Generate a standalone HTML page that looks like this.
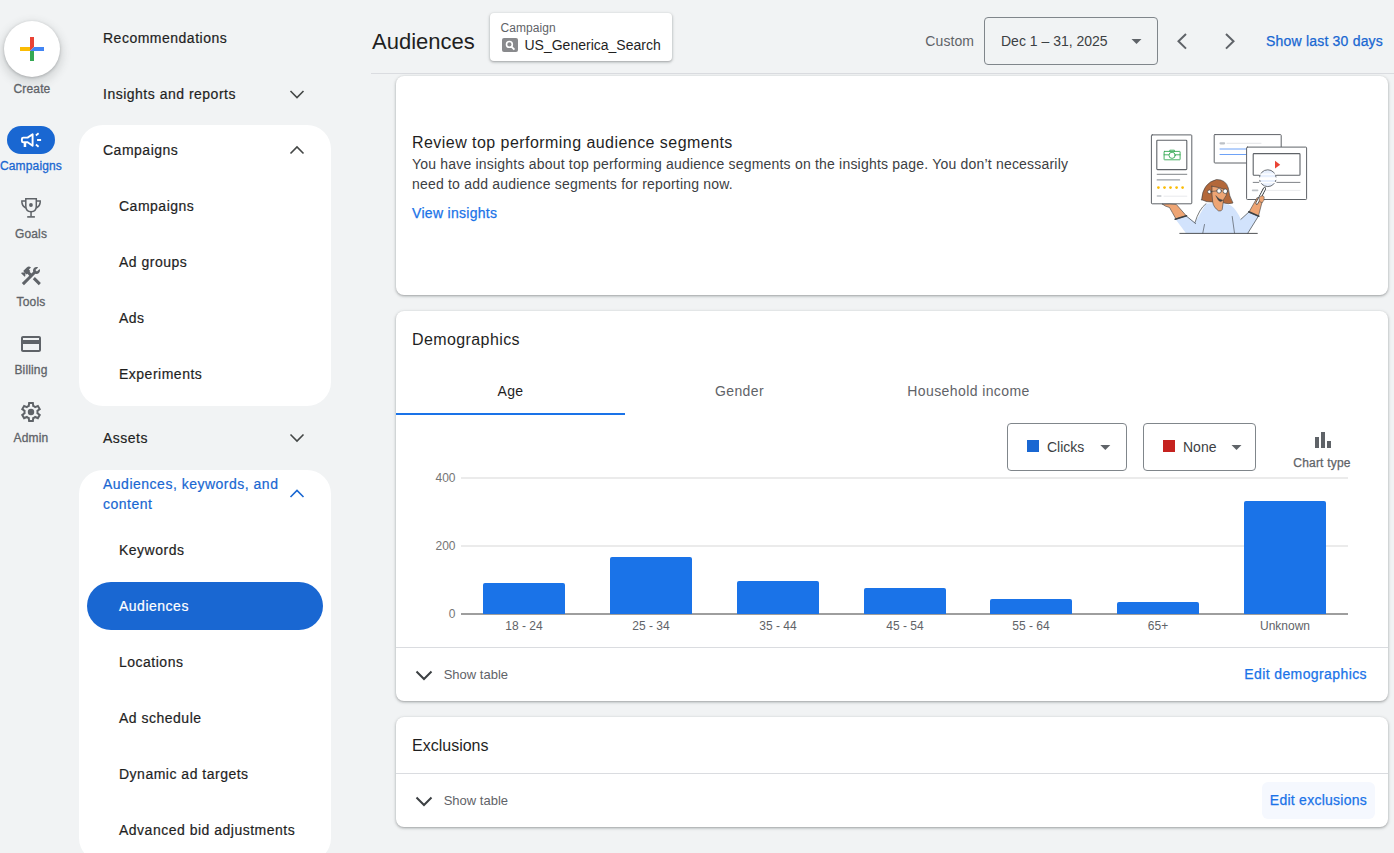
<!DOCTYPE html>
<html><head><meta charset="utf-8"><style>
html,body{margin:0;padding:0;}
body{width:1394px;height:853px;overflow:hidden;background:#f1f3f4;font-family:"Liberation Sans",sans-serif;position:relative;}
.t{position:absolute;white-space:nowrap;}
.r{position:absolute;}
</style></head><body>
<div class="r" style="left:4px;top:21px;width:56px;height:56px;background:#fff;border-radius:50%;box-shadow:0 1px 3px rgba(60,64,67,.3),0 4px 8px 3px rgba(60,64,67,.15);"></div>
<svg class="r" style="left:20px;top:37px" width="24" height="24" viewBox="0 0 24 24"><path d="M10 0H14V10L10 14Z" fill="#ea4335"/><path d="M0 10H10V14H0Z" fill="#fbbc04"/><path d="M14 10H24V14H10Z" fill="#4285f4"/><path d="M10 14H14V24H10Z" fill="#34a853"/></svg>
<div class="t" style="top:80.00px;font-size:12px;line-height:18px;color:#5f6368;letter-spacing:0.15px;-webkit-text-stroke:0.3px #5f6368;left:-8.0px;width:80px;text-align:center;">Create</div>
<div class="r" style="left:7px;top:126px;width:48px;height:28px;background:#1967d2;border-radius:14px;"></div>
<svg class="r" style="left:0;top:0" width="60" height="460" viewBox="0 0 60 460"><g fill="none" stroke="#fff" stroke-width="1.9" stroke-linejoin="round"><path d="M21.9 139Q21.9 137.6 23.3 137.6H27.6L32.6 134.2V145.8L27.6 142.3H23.3Q21.9 142.3 21.9 140.9Z"/><path d="M35.9 135.4L38.6 133.3M37.1 140H41.1M35.9 144.6L38.6 146.7"/></g><rect x="23.7" y="142" width="2.5" height="5" fill="#fff"/></svg>
<div class="t" style="top:157.30px;font-size:12px;line-height:18px;color:#1967d2;letter-spacing:0.15px;-webkit-text-stroke:0.3px #1967d2;left:-9.0px;width:80px;text-align:center;">Campaigns</div>
<svg class="r" style="left:0;top:0" width="60" height="460" viewBox="0 0 60 460"><g fill="none" stroke="#5f6368" stroke-width="1.5"><path d="M25.8 198.8H36.3V206Q36.3 211.7 31.05 211.7Q25.8 211.7 25.8 206Z"/><path d="M25.8 200.9H21.9V202.5Q22.3 206.3 25.8 208.2"/><path d="M36.3 200.9H40.2V202.5Q39.8 206.3 36.3 208.2"/></g><rect x="30.3" y="211.5" width="1.5" height="5" fill="#5f6368"/><rect x="27.2" y="216.1" width="7.7" height="1.6" fill="#5f6368"/><circle cx="30.95" cy="205" r="1.9" fill="#5f6368"/></svg>
<div class="t" style="top:225.00px;font-size:12px;line-height:18px;color:#5f6368;letter-spacing:0.15px;-webkit-text-stroke:0.3px #5f6368;left:-9.0px;width:80px;text-align:center;">Goals</div>
<svg class="r" style="left:19px;top:264px" width="24" height="24" viewBox="0 0 24 24"><path fill="#5f6368" d="M13.78 15.17l2.12-2.12 6 6-2.12 2.12zM17.5 10c1.93 0 3.5-1.57 3.5-3.5 0-.58-.16-1.12-.39-1.61L17.9 7.6l-1.5-1.5 2.71-2.71C18.62 3.16 18.08 3 17.5 3 15.57 3 14 4.570 14 6.5c0 .41.08.8.21 1.16l-1.85 1.850-1.78-1.78.71-.71-1.41-1.41L12 3.49a3 3 0 0 0-4.24 0L4.22 7.03l1.41 1.41H2.81l-.71.71 3.540 3.540.71-.71V9.15l1.41 1.41.71-.71 1.78 1.78-7.41 7.41 2.12 2.12L16.34 9.79c.36.13.75.21 1.16.21z"/></svg>
<div class="t" style="top:293.00px;font-size:12px;line-height:18px;color:#5f6368;letter-spacing:0.15px;-webkit-text-stroke:0.3px #5f6368;left:-9.0px;width:80px;text-align:center;">Tools</div>
<svg class="r" style="left:19px;top:332px" width="24" height="24" viewBox="0 0 24 24"><path fill="#5f6368" d="M20 4H4c-1.11 0-1.99.89-1.99 2L2 18c0 1.11.89 2 2 2h16c1.11 0 2-.89 2-2V6c0-1.11-.89-2-2-2zm0 14H4v-6h16v6zm0-10H4V6h16v2z"/></svg>
<div class="t" style="top:361.00px;font-size:12px;line-height:18px;color:#5f6368;letter-spacing:0.15px;-webkit-text-stroke:0.3px #5f6368;left:-9.0px;width:80px;text-align:center;">Billing</div>
<svg class="r" style="left:19px;top:400px" width="24" height="24" viewBox="0 -960 960 960"><path fill="#5f6368" fill-rule="evenodd" d="m370-80-16-128q-13-5-24.5-12T307-235l-119 50L78-375l103-78q-1-7-1-13.5v-27q0-6.5 1-13.5L78-585l110-190 119 50q11-8 23-15t24-12l16-128h220l16 128q13 5 24.5 12t22.5 15l119-50 110 190-103 78q1 7 1 13.5v27q0 6.5-2 13.5l103 78-110 190-118-50q-11 8-23 15t-24 12L590-80H370Zm70-80h79l14-106q31-8 57.5-23.5T639-327l99 41 39-68-86-65q5-14 7-29.5t2-31.5q0-16-2-31.5t-7-29.5l86-65-39-68-99 42q-22-23-48.5-38.5T533-694l-13-106h-79l-14 106q-31 8-57.5 23.5T321-633l-99-41-39 68 86 64q-5 15-7 30t-2 32q0 16 2 31t7 30l-86 65 39 68 99-42q22 23 48.5 38.5T427-266l13 106Z"/><circle cx="480" cy="-480" r="128" fill="#5f6368"/></svg>
<div class="t" style="top:429.00px;font-size:12px;line-height:18px;color:#5f6368;letter-spacing:0.15px;-webkit-text-stroke:0.3px #5f6368;left:-9.0px;width:80px;text-align:center;">Admin</div>
<div class="t" style="top:27.50px;font-size:14px;line-height:21px;color:#1f1f1f;letter-spacing:0.5px;-webkit-text-stroke:0.2px #1f1f1f;left:103px;">Recommendations</div>
<div class="t" style="top:83.50px;font-size:14px;line-height:21px;color:#1f1f1f;letter-spacing:0.5px;-webkit-text-stroke:0.2px #1f1f1f;left:103px;">Insights and reports</div>
<svg class="r" style="left:0;top:0" width="1394" height="853"><path d="M290.5,91.0 L297,97.5 L303.5,91.0" fill="none" stroke="#444746" stroke-width="1.6"/></svg>
<div class="r" style="left:79px;top:125px;width:252px;height:281px;background:#fff;border-radius:24px;"></div>
<div class="t" style="top:139.50px;font-size:14px;line-height:21px;color:#1f1f1f;letter-spacing:0.5px;-webkit-text-stroke:0.2px #1f1f1f;left:103px;">Campaigns</div>
<svg class="r" style="left:0;top:0" width="1394" height="853"><path d="M290.5,153.5 L297,147 L303.5,153.5" fill="none" stroke="#444746" stroke-width="1.6"/></svg>
<div class="t" style="top:195.50px;font-size:14px;line-height:21px;color:#1f1f1f;letter-spacing:0.5px;-webkit-text-stroke:0.2px #1f1f1f;left:119px;">Campaigns</div>
<div class="t" style="top:251.50px;font-size:14px;line-height:21px;color:#1f1f1f;letter-spacing:0.5px;-webkit-text-stroke:0.2px #1f1f1f;left:119px;">Ad groups</div>
<div class="t" style="top:307.50px;font-size:14px;line-height:21px;color:#1f1f1f;letter-spacing:0.5px;-webkit-text-stroke:0.2px #1f1f1f;left:119px;">Ads</div>
<div class="t" style="top:363.50px;font-size:14px;line-height:21px;color:#1f1f1f;letter-spacing:0.5px;-webkit-text-stroke:0.2px #1f1f1f;left:119px;">Experiments</div>
<div class="t" style="top:427.50px;font-size:14px;line-height:21px;color:#1f1f1f;letter-spacing:0.5px;-webkit-text-stroke:0.2px #1f1f1f;left:103px;">Assets</div>
<svg class="r" style="left:0;top:0" width="1394" height="853"><path d="M290.5,434.5 L297,441 L303.5,434.5" fill="none" stroke="#444746" stroke-width="1.6"/></svg>
<div class="r" style="left:79px;top:470px;width:252px;height:392px;background:#fff;border-radius:24px;"></div>
<div class="t" style="top:474.00px;font-size:14px;line-height:21px;color:#1967d2;letter-spacing:0.5px;-webkit-text-stroke:0.2px #1967d2;left:103px;">Audiences, keywords, and</div>
<div class="t" style="top:494.00px;font-size:14px;line-height:21px;color:#1967d2;letter-spacing:0.5px;-webkit-text-stroke:0.2px #1967d2;left:103px;">content</div>
<svg class="r" style="left:0;top:0" width="1394" height="853"><path d="M290.5,497.0 L297,490.5 L303.5,497.0" fill="none" stroke="#1967d2" stroke-width="1.6"/></svg>
<div class="t" style="top:539.50px;font-size:14px;line-height:21px;color:#1f1f1f;letter-spacing:0.5px;-webkit-text-stroke:0.2px #1f1f1f;left:119px;">Keywords</div>
<div class="r" style="left:87px;top:582px;width:236px;height:48px;background:#1967d2;border-radius:24px;"></div>
<div class="t" style="top:595.50px;font-size:14px;line-height:21px;color:#fff;letter-spacing:0.5px;-webkit-text-stroke:0.2px #fff;left:119px;">Audiences</div>
<div class="t" style="top:651.50px;font-size:14px;line-height:21px;color:#1f1f1f;letter-spacing:0.5px;-webkit-text-stroke:0.2px #1f1f1f;left:119px;">Locations</div>
<div class="t" style="top:707.50px;font-size:14px;line-height:21px;color:#1f1f1f;letter-spacing:0.5px;-webkit-text-stroke:0.2px #1f1f1f;left:119px;">Ad schedule</div>
<div class="t" style="top:763.50px;font-size:14px;line-height:21px;color:#1f1f1f;letter-spacing:0.5px;-webkit-text-stroke:0.2px #1f1f1f;left:119px;">Dynamic ad targets</div>
<div class="t" style="top:819.50px;font-size:14px;line-height:21px;color:#1f1f1f;letter-spacing:0.5px;-webkit-text-stroke:0.2px #1f1f1f;left:119px;">Advanced bid adjustments</div>
<div class="t" style="top:24.60px;font-size:22px;line-height:33px;color:#1f1f1f;left:372px;">Audiences</div>
<div class="r" style="left:490px;top:13px;width:182px;height:48px;background:#fff;border-radius:4px;box-shadow:0 1px 2px rgba(60,64,67,.3),0 1px 3px 1px rgba(60,64,67,.15);"></div>
<div class="t" style="top:19.00px;font-size:12px;line-height:18px;color:#5f6368;letter-spacing:0.1px;left:500.4px;">Campaign</div>
<svg class="r" style="left:502px;top:38px" width="16" height="14" viewBox="0 0 16 14"><rect x="0" y="0" width="16" height="14" rx="2" fill="#898a8d"/><circle cx="7.4" cy="6.4" r="2.9" fill="none" stroke="#fff" stroke-width="1.6"/><path d="M9.4 8.6 L12.4 11.6" stroke="#fff" stroke-width="1.9"/></svg>
<div class="t" style="top:34.50px;font-size:14px;line-height:21px;color:#1f1f1f;left:524.5px;">US_Generica_Search</div>
<div class="t" style="top:30.50px;font-size:14px;line-height:21px;color:#5f6368;letter-spacing:0.1px;left:925.3px;">Custom</div>
<div class="r" style="left:984px;top:17px;width:174px;height:48px;border:1px solid #80868b;border-radius:4px;box-sizing:border-box;"></div>
<div class="t" style="top:30.50px;font-size:14px;line-height:21px;color:#3c4043;left:1001px;">Dec 1 – 31, 2025</div>
<svg class="r" style="left:0;top:0" width="1394" height="853"><path d="M1131.5 38.9 L1141.5 38.9 L1136.5 43.9 Z" fill="#5f6368"/><path d="M1186 34 L1178.5 41.3 L1186 48.6" fill="none" stroke="#5f6368" stroke-width="2"/><path d="M1226 34 L1233.5 41.3 L1226 48.6" fill="none" stroke="#5f6368" stroke-width="2"/></svg>
<div class="t" style="top:30.50px;font-size:14px;line-height:21px;color:#1967d2;letter-spacing:0.2px;-webkit-text-stroke:0.25px #1967d2;left:1266px;">Show last 30 days</div>
<div class="r" style="left:371px;top:73px;width:1023px;height:1px;background:#dadce0;"></div>
<div class="r" style="left:396px;top:76px;width:992px;height:219px;background:#fff;border-radius:8px;box-shadow:0 1px 2px rgba(60,64,67,.3),0 1px 3px 1px rgba(60,64,67,.15);"></div>
<div class="t" style="top:130.50px;font-size:16px;line-height:24px;color:#1f1f1f;letter-spacing:0.45px;left:412px;">Review top performing audience segments</div>
<div class="t" style="top:153.50px;font-size:14px;line-height:21px;color:#3c4043;letter-spacing:0.2px;left:412px;">You have insights about top performing audience segments on the insights page. You don’t necessarily</div>
<div class="t" style="top:173.70px;font-size:14px;line-height:21px;color:#3c4043;letter-spacing:0.2px;left:412px;">need to add audience segments for reporting now.</div>
<div class="t" style="top:202.50px;font-size:14px;line-height:21px;color:#1a73e8;letter-spacing:0.3px;-webkit-text-stroke:0.25px #1a73e8;left:412px;">View insights</div>
<svg class="r" style="left:1140px;top:125px" width="180" height="120" viewBox="1140 125 180 120">
<g fill="none" stroke-linecap="round" stroke-linejoin="round">
<!-- top card -->
<rect x="1214.2" y="134.6" width="67" height="28.4" rx="0.8" fill="#fff" stroke="#5f6368" stroke-width="1"/>
<path d="M1220.5 143.3h3.6" stroke="#bdc1c6" stroke-width="2.2"/>
<path d="M1227 143.3h34" stroke="#dadce0" stroke-width="0.8"/>
<path d="M1220 149h27M1220 154.5h27" stroke="#5e97f6" stroke-width="0.9"/>
<!-- left card -->
<rect x="1151.4" y="134.9" width="40.4" height="68.9" rx="0.8" fill="#fff" stroke="#5f6368" stroke-width="1"/>
<rect x="1156.8" y="140.3" width="30" height="29.3" rx="0.8" stroke="#5f6368" stroke-width="1.1"/>
<g stroke="#34a853" stroke-width="0.9">
<rect x="1164.1" y="151.4" width="16" height="8.4" rx="0.4"/>
<path d="M1164.1 154.8h4.8M1175.3 154.8h4.8"/>
<circle cx="1172.1" cy="155.3" r="3.1" fill="#fff"/>
<path d="M1169.8 151.4v-1.2h4.6v1.2"/>
</g>
<path d="M1157.2 174.3h29.6" stroke="#5f6368" stroke-width="0.8"/>
<path d="M1157.2 179.9h22.4" stroke="#9aa0a6" stroke-width="1.2"/>
<g fill="#fbbc04"><circle cx="1158.4" cy="187.6" r="1.35"/><circle cx="1164.5" cy="187.6" r="1.35"/><circle cx="1170.5" cy="187.6" r="1.35"/><circle cx="1176.6" cy="187.6" r="1.35"/><circle cx="1182.6" cy="187.6" r="1.35"/></g>
<path d="M1157.4 196h3.4" stroke="#bdc1c6" stroke-width="1.6"/>
<path d="M1164 196.2h22.8" stroke="#dadce0" stroke-width="0.6"/>
<!-- right card -->
<rect x="1246.6" y="147.1" width="60" height="52.4" rx="0.8" fill="#fff" stroke="#5f6368" stroke-width="1"/>
<rect x="1253.2" y="153.6" width="46.8" height="21.6" rx="0.8" stroke="#5f6368" stroke-width="1.1"/>
<path d="M1275 160.8l5.2 3.9-5.2 3.9z" fill="#ea4335"/>
<path d="M1253.2 182.4h46.8" stroke="#5f6368" stroke-width="0.8"/>
<path d="M1252.6 190.4h5" stroke="#bdc1c6" stroke-width="1.6"/>
<path d="M1265 190.4h35" stroke="#dadce0" stroke-width="0.6"/>
<!-- magnifier -->
<circle cx="1267.8" cy="178.2" r="8.4" fill="#e8f0fe" stroke="#5f6368" stroke-width="0.9"/>
<path d="M1259.6 178.6h16.4" stroke="#fff" stroke-width="2.6"/><path d="M1259.6 174.2h16.4M1259.6 182.6h16.4" stroke="#fff" stroke-width="1.2"/>
<path d="M1264.2 189.2l-5.4 11" stroke="#3c4043" stroke-width="3"/>
<path d="M1264.2 189.2l-5.4 11" stroke="#fff" stroke-width="1.6"/>
<!-- person shirt -->
<path d="M1175.6 219.3 L1186.3 216 L1195 222.5 L1206 203.7 Q1218 201.5 1230.6 205.3 Q1236 209 1240.9 219.3 L1249 211.9 L1258.5 216 L1247.8 233.2 L1186 233.2 Z" fill="#d2e3fc" stroke="none"/>
<path d="M1195 222.5 Q1199 209 1206 203.7" stroke="#3c4043" stroke-width="0.7"/>
<path d="M1186.3 216 L1195.6 223.6" stroke="#3c4043" stroke-width="0.7"/>
<path d="M1240.9 219.3 L1249 211.9" stroke="#3c4043" stroke-width="0.7"/>
<path d="M1258.5 216 L1247.8 233.2" stroke="#3c4043" stroke-width="0.7"/>
<path d="M1204.5 224.5 L1202.8 233" stroke="#3c4043" stroke-width="0.6"/>
<path d="M1232.2 216.5 L1234.5 233" stroke="#3c4043" stroke-width="0.6"/>
<!-- left arm -->
<path d="M1162.5 204.2 Q1170 203.8 1176.4 204.5 L1186.3 215.8 L1176 219 Q1172 212 1169.5 207.5 Q1164.5 206.3 1162.5 204.2 Z" fill="#eea574" stroke="#3c4043" stroke-width="0.6"/>
<path d="M1175.2 219.2 L1186.5 215.8" stroke="#3c4043" stroke-width="1.6"/>
<!-- right arm -->
<path d="M1249 212 L1257.2 197.5 L1262.2 201.5 L1258.6 215.5 Z" fill="#eea574" stroke="#3c4043" stroke-width="0.6"/>
<path d="M1264.6 188.6 L1256.9 203.2" stroke="#3c4043" stroke-width="2.8"/>
<path d="M1264.6 188.6 L1256.9 203.2" stroke="#fff" stroke-width="1.4"/>
<path d="M1259.6 197.2 Q1262.5 194.2 1264.2 197 Q1264.6 200.5 1262.3 202.6 Q1260 203 1259.2 200.5 Z" fill="#eea574" stroke="#3c4043" stroke-width="0.5"/>
<path d="M1248.8 211.8 L1258.8 216.2" stroke="#3c4043" stroke-width="1.6"/>
<!-- hair -->
<path d="M1201.6 199.8 Q1202.5 183 1216.5 179.5 Q1226 179.5 1228.3 188 Q1229 196 1233 203 Q1228.5 204.5 1223 202.8 L1212.5 202 Q1207 202.5 1201.6 199.8 Z" fill="#b3683a" stroke="#3c4043" stroke-width="0.6"/>
<!-- face -->
<path d="M1212 186.2 Q1220 187.2 1227.2 190.4 Q1226.8 196 1223.6 199.6 Q1222.8 205 1222.2 209.5 Q1221.3 211.6 1218.6 210.9 Q1213.6 207.5 1212.7 202 Q1211.7 195 1212 186.2 Z" fill="#eea574" stroke="#3c4043" stroke-width="0.6"/>
<path d="M1216 196 Q1218.5 201.6 1220.6 201.6 Q1221.8 201.2 1222.8 200.2 Q1219.5 200 1216 196 Z" fill="#3c4043" stroke="#3c4043" stroke-width="0.5"/>
<circle cx="1219.1" cy="190.9" r="2.3" fill="#fff" stroke="#3c4043" stroke-width="0.7"/>
<circle cx="1225.3" cy="191.2" r="2.3" fill="#fff" stroke="#3c4043" stroke-width="0.7"/>
<circle cx="1209.4" cy="191.8" r="1.8" fill="#fff" stroke="#3c4043" stroke-width="0.6"/>
<path d="M1211 191.5 L1216.8 190.9" stroke="#3c4043" stroke-width="0.6"/>
<!-- table line -->
<path d="M1179.8 233.4h77.5" stroke="#3c4043" stroke-width="0.9"/>
</g>
</svg>

<div class="r" style="left:396px;top:311px;width:992px;height:390px;background:#fff;border-radius:8px;box-shadow:0 1px 2px rgba(60,64,67,.3),0 1px 3px 1px rgba(60,64,67,.15);"></div>
<div class="t" style="top:327.50px;font-size:16px;line-height:24px;color:#1f1f1f;letter-spacing:0.4px;left:412px;">Demographics</div>
<div class="t" style="top:380.90px;font-size:14px;line-height:21px;color:#1f1f1f;letter-spacing:0.4px;left:396.0px;width:229px;text-align:center;">Age</div>
<div class="t" style="top:380.90px;font-size:14px;line-height:21px;color:#5f6368;letter-spacing:0.4px;left:625.0px;width:229px;text-align:center;">Gender</div>
<div class="t" style="top:380.90px;font-size:14px;line-height:21px;color:#5f6368;letter-spacing:0.4px;left:854.0px;width:229px;text-align:center;">Household income</div>
<div class="r" style="left:396px;top:413px;width:229px;height:2px;background:#1a73e8;"></div>
<div class="r" style="left:1007px;top:423px;width:120px;height:48px;border:1px solid #80868b;border-radius:4px;box-sizing:border-box;"></div>
<div class="r" style="left:1027px;top:440px;width:12px;height:12px;background:#1967d2;"></div>
<div class="t" style="top:436.50px;font-size:14px;line-height:21px;color:#3c4043;left:1047px;">Clicks</div>
<div class="r" style="left:1143px;top:423px;width:113px;height:48px;border:1px solid #80868b;border-radius:4px;box-sizing:border-box;"></div>
<div class="r" style="left:1163px;top:440px;width:12px;height:12px;background:#c5221f;"></div>
<div class="t" style="top:436.50px;font-size:14px;line-height:21px;color:#3c4043;left:1183px;">None</div>
<svg class="r" style="left:0;top:0" width="1394" height="853"><path d="M1100.3 445 L1110.3 445 L1105.3 450 Z" fill="#5f6368"/><path d="M1231.5 445 L1241.5 445 L1236.5 450 Z" fill="#5f6368"/></svg>
<div class="r" style="left:1315px;top:437px;width:4px;height:11px;background:#5f6368;"></div>
<div class="r" style="left:1321px;top:432px;width:4px;height:16px;background:#5f6368;"></div>
<div class="r" style="left:1327px;top:441px;width:4px;height:7px;background:#5f6368;"></div>
<div class="t" style="top:454.00px;font-size:12px;line-height:18px;color:#5f6368;letter-spacing:0.2px;-webkit-text-stroke:0.25px #5f6368;left:1272.0px;width:100px;text-align:center;">Chart type</div>
<div class="r" style="left:461px;top:477px;width:887px;height:2px;background:#ebebeb;"></div>
<div class="r" style="left:461px;top:545px;width:887px;height:2px;background:#ebebeb;"></div>
<div class="r" style="left:461px;top:613px;width:887px;height:2px;background:#9e9e9e;"></div>
<div class="t" style="top:469.00px;font-size:12px;line-height:18px;color:#757575;right:938.5px;text-align:right;">400</div>
<div class="t" style="top:537.00px;font-size:12px;line-height:18px;color:#757575;right:938.5px;text-align:right;">200</div>
<div class="t" style="top:605.00px;font-size:12px;line-height:18px;color:#757575;right:938.5px;text-align:right;">0</div>
<div class="r" style="left:483px;top:583px;width:82px;height:31px;background:#1a73e8;border-radius:2px 2px 0 0;"></div>
<div class="t" style="top:617.00px;font-size:12px;line-height:18px;color:#5f6368;left:464.0px;width:120px;text-align:center;">18 - 24</div>
<div class="r" style="left:610px;top:557px;width:82px;height:57px;background:#1a73e8;border-radius:2px 2px 0 0;"></div>
<div class="t" style="top:617.00px;font-size:12px;line-height:18px;color:#5f6368;left:591.0px;width:120px;text-align:center;">25 - 34</div>
<div class="r" style="left:737px;top:581px;width:82px;height:33px;background:#1a73e8;border-radius:2px 2px 0 0;"></div>
<div class="t" style="top:617.00px;font-size:12px;line-height:18px;color:#5f6368;left:718.0px;width:120px;text-align:center;">35 - 44</div>
<div class="r" style="left:864px;top:588px;width:82px;height:26px;background:#1a73e8;border-radius:2px 2px 0 0;"></div>
<div class="t" style="top:617.00px;font-size:12px;line-height:18px;color:#5f6368;left:845.0px;width:120px;text-align:center;">45 - 54</div>
<div class="r" style="left:990px;top:599px;width:82px;height:15px;background:#1a73e8;border-radius:2px 2px 0 0;"></div>
<div class="t" style="top:617.00px;font-size:12px;line-height:18px;color:#5f6368;left:971.0px;width:120px;text-align:center;">55 - 64</div>
<div class="r" style="left:1117px;top:602px;width:82px;height:12px;background:#1a73e8;border-radius:2px 2px 0 0;"></div>
<div class="t" style="top:617.00px;font-size:12px;line-height:18px;color:#5f6368;left:1098.0px;width:120px;text-align:center;">65+</div>
<div class="r" style="left:1244px;top:501px;width:82px;height:113px;background:#1a73e8;border-radius:2px 2px 0 0;"></div>
<div class="t" style="top:617.00px;font-size:12px;line-height:18px;color:#5f6368;left:1225.0px;width:120px;text-align:center;">Unknown</div>
<div class="r" style="left:396px;top:647px;width:992px;height:1px;background:#dadce0;"></div>
<svg class="r" style="left:0;top:0" width="1394" height="853"><path d="M416.5,671.5 L424,679.0 L431.5,671.5" fill="none" stroke="#3c4043" stroke-width="2"/></svg>
<div class="t" style="top:664.50px;font-size:13px;line-height:20px;color:#5f6368;left:443.7px;">Show table</div>
<div class="t" style="top:664.00px;font-size:14px;line-height:21px;color:#1a73e8;letter-spacing:0.4px;-webkit-text-stroke:0.25px #1a73e8;right:27px;text-align:right;">Edit demographics</div>
<div class="r" style="left:396px;top:717px;width:992px;height:110px;background:#fff;border-radius:8px;box-shadow:0 1px 2px rgba(60,64,67,.3),0 1px 3px 1px rgba(60,64,67,.15);"></div>
<div class="t" style="top:733.50px;font-size:16px;line-height:24px;color:#1f1f1f;left:412px;">Exclusions</div>
<div class="r" style="left:396px;top:773px;width:992px;height:1px;background:#dadce0;"></div>
<svg class="r" style="left:0;top:0" width="1394" height="853"><path d="M416.5,797.5 L424,805.0 L431.5,797.5" fill="none" stroke="#3c4043" stroke-width="2"/></svg>
<div class="t" style="top:790.50px;font-size:13px;line-height:20px;color:#5f6368;left:443.7px;">Show table</div>
<div class="r" style="left:1262px;top:782px;width:113px;height:37px;background:#f5f8fe;border-radius:6px;"></div>
<div class="t" style="top:790.00px;font-size:14px;line-height:21px;color:#1a73e8;letter-spacing:0.25px;-webkit-text-stroke:0.25px #1a73e8;right:27px;text-align:right;">Edit exclusions</div>
</body></html>
